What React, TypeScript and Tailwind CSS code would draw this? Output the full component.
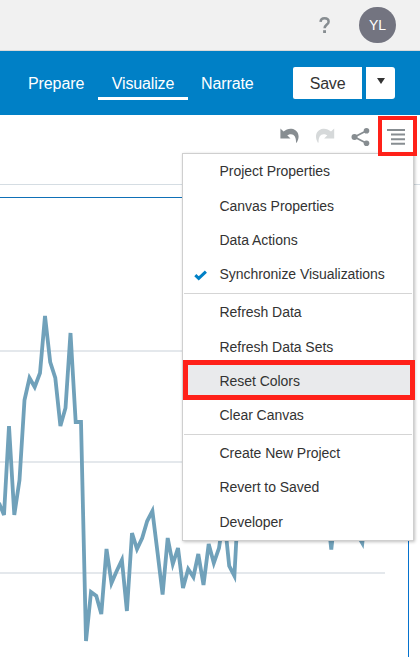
const groups = [
  ["Project Properties", "Canvas Properties", "Data Actions", "Synchronize Visualizations"],
  ["Refresh Data", "Refresh Data Sets", "Reset Colors", "Clear Canvas"],
  ["Create New Project", "Revert to Saved", "Developer"],
];

const series =
  "-1,503 4,515 9,426 14.3,515 19.5,480 24.5,400 29.5,378 34.7,387 40,373 45,316 50.2,362 55.3,378 60.4,426 65.5,408 70.5,333 75.7,422 81,422 86,641 91,592 96.3,596 101.3,614 106.5,549 111.5,583 116.7,571 121.9,560 126.9,611 132,533 137,549 142.2,538 147.2,521 152.4,511 157.6,553 162.6,594.5 167.7,538 172.8,564 178,548 183,588 188.2,569 193.4,577 198.3,554 203.5,585 208.7,544 213.8,563 219,548 224,515 229.2,566 234.4,576 239.5,480 326,500 331.3,549.5 336.5,500 357,534 362.3,543 367,500";

function Chart() {
  return (
    <svg className="absolute left-0 top-0" width="420" height="657" viewBox="0 0 420 657" fill="none">
      <path d="M0 351H385M0 462H385M0 573H385" stroke="#e4e8ec" strokeWidth="2" />
      <polyline points={series} stroke="#70a1ba" strokeWidth="3.8" strokeMiterlimit="4" />
    </svg>
  );
}

function Item({ label }: { label: string }) {
  const active = label === "Reset Colors";
  return (
    <div className={`flex h-[34.4px] items-center ${active ? "bg-[#e9eaec]" : ""}`}>
      <span className="flex w-[35.5px] justify-center pr-[2px]">
        {label === "Synchronize Visualizations" && (
          <svg className="mt-[2px]" width="13" height="11" viewBox="0 0 13 11" fill="none">
            <path d="M1.3 5.2L4.7 8.4L11.9 1.6" stroke="#0080c6" strokeWidth="3" />
          </svg>
        )}
      </span>
      <span className="whitespace-nowrap tracking-[-0.04px]">{label}</span>
    </div>
  );
}

export default function App() {
  return (
    <div className="relative flex h-[657px] w-[420px] flex-col overflow-hidden bg-white font-['Liberation_Sans',Arial,sans-serif] text-[#333]">
      <header className="flex h-[51px] items-center justify-end border-b border-[#d9d9d9] bg-[#f1f1f1] pr-6">
        <svg className="mr-[29px]" width="11" height="17" viewBox="0 0 11 17" fill="none">
          <path d="M1.5 4.9C1.7 2.5 3.1 1.3 5.5 1.3C8 1.3 9.6 2.6 9.6 4.7C9.6 7.6 5.8 7.6 5.6 11.3" stroke="#878d91" strokeWidth="2.5" />
          <path d="M4.1 13.2H7V16H4.1Z" fill="#878d91" />
        </svg>
        <div className="flex h-[36px] w-[37px] items-center justify-center rounded-full bg-[#737480] text-sm text-white">YL</div>
      </header>
      <nav className="flex h-16 items-center bg-[#0080c6] text-base text-white">
        <span className="ml-[28px] mt-[2px] w-[56px] whitespace-nowrap tracking-[-0.1px]">Prepare</span>
        <span className="ml-[14px] flex h-[34px] w-[90px] justify-center border-b-[3px] border-white pt-[6px] tracking-[-0.15px]">Visualize</span>
        <span className="ml-[13px] mt-[2px] w-[54px] tracking-[-0.1px]">Narrate</span>
        <button className="ml-[38px] h-8 w-[69px] rounded-l-[2px] bg-white pt-[2px] text-[#333] tracking-[-0.2px]">Save</button>
        <button className="ml-1 flex h-8 w-[29px] items-center justify-center rounded-r-[3px] bg-white">
          <svg className="mb-[4px]" width="8" height="6" viewBox="0 0 8 6"><path d="M0 0H8L4 6Z" fill="#333" /></svg>
        </button>
      </nav>
      <div className="flex h-[70px] items-start border-b border-[#d5dde3] pl-[280px] pt-[12px]">
        <svg width="20" height="18" viewBox="0 0 20 18" fill="#878d91">
          <path d="M.4 1.5L3.6 4.6C5.8 2.6 8.5 1.4 11.5 1.7C18.5 2.5 20.5 9.8 16.7 15.7L16 15.5C16.3 10.8 14.5 7.3 11 7.2C9.5 7.2 8.5 7.6 7.2 8.3L10.5 11.5H.4Z" />
        </svg>
        <svg className="ml-[15px]" width="20" height="18" viewBox="0 0 20 18" fill="#d6d9da">
          <path d="M19.2 1.5L16 4.6C13.8 2.6 11.1 1.4 8.1 1.7C1.1 2.5-.9 9.8 2.9 15.7L3.6 15.5C3.3 10.8 5.1 7.3 8.6 7.2C10.1 7.2 11.1 7.6 12.4 8.3L9.1 11.5H19.2Z" />
        </svg>
        <svg className="ml-4" width="19" height="20" viewBox="0 0 19 20" fill="#878d91">
          <path d="M15.5 3.8L3.5 10L15.5 16.3" fill="none" stroke="#878d91" strokeWidth="1.8" />
          <circle cx="3.5" cy="10" r="3" /><circle cx="15.5" cy="3.8" r="2.8" /><circle cx="15.5" cy="16.3" r="2.8" />
        </svg>
        <svg className="ml-[17px] mt-[1px]" width="19" height="18" viewBox="0 0 19 18">
          <path d="M0 2H18M4 6.6H18M4 11.2H18M4 15.8H18" stroke="#878d91" strokeWidth="2" />
        </svg>
      </div>
      <main className="mr-[11px] mt-3 flex-1 border-r border-t border-r-[#0572ce] border-t-[#0f70b7]" />
      <Chart />
      <div className="absolute left-[182px] top-[153px] h-[388px] w-[232px] border border-[#cfcfcf] bg-white text-sm shadow-[1px_1px_3px_rgba(0,0,0,0.25)]">
        {groups.map((items, index) => (
          <div key={index} className={index ? "mx-px mt-[1.4px] border-t border-[#d5d5d5] pt-px" : "mx-px"}>
            {items.map((label) => <Item key={label} label={label} />)}
          </div>
        ))}
      </div>
      <div className="absolute left-[378px] top-[116px] h-[40px] w-[39px] border-4 border-[#ff2119]" />
      <div className="absolute left-[183px] top-[360px] h-[40px] w-[232px] border-[5px] border-[#ff2119]" />
    </div>
  );
}
